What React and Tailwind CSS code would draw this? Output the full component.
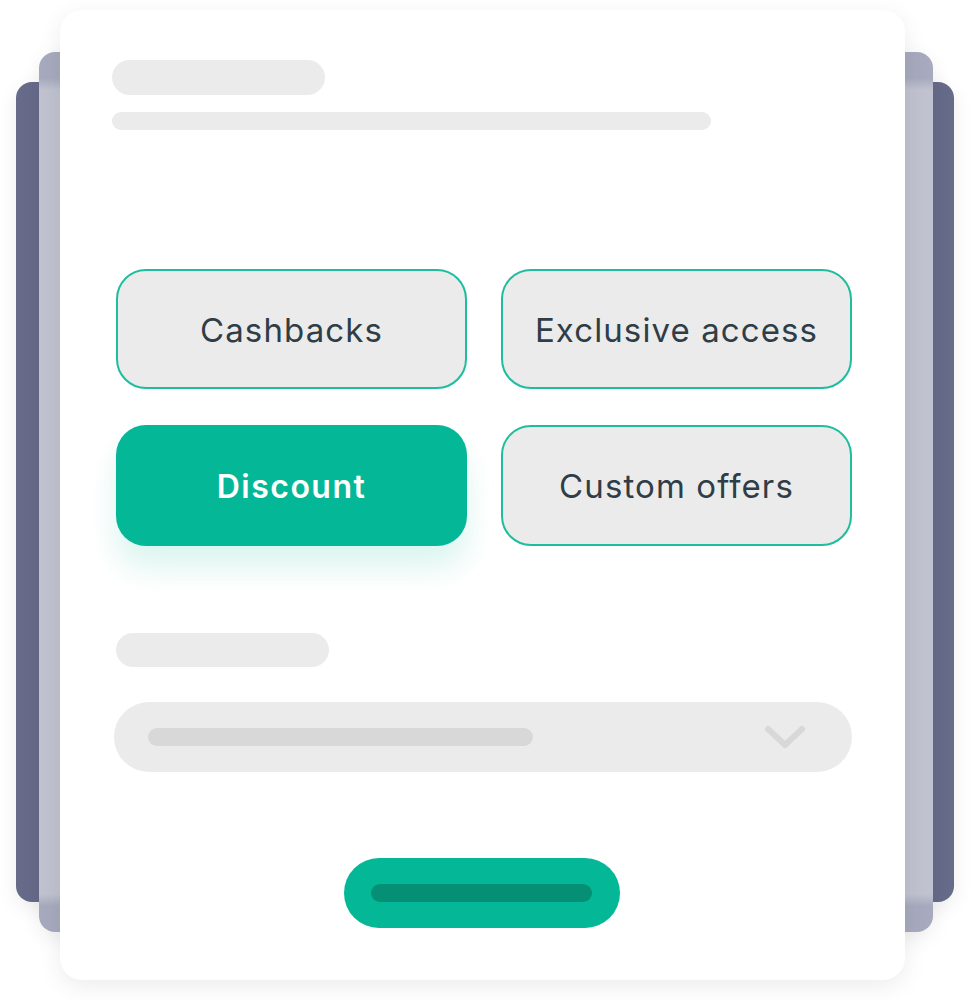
export default function App() {
  const font = { fontFamily: "Inter, 'Noto Sans', sans-serif" };
  return (
    <div className="relative w-[970px] h-[1000px] bg-white overflow-hidden" style={font}>
      {/* back dark card */}
      <div className="absolute left-[16px] top-[82px] w-[938px] h-[820px] rounded-[16px] bg-[#676b8a] shadow-[0_6px_20px_rgba(0,0,0,0.08)]" />
      {/* middle card */}
      <div className="absolute left-[39px] top-[52px] w-[894px] h-[880px] rounded-[16px] bg-[linear-gradient(180deg,#a7aabe_0px,#a7aabe_26px,#c0c2cf_38px,#c0c2cf_842px,#a7aabe_854px,#a7aabe_880px)] shadow-[0_6px_20px_rgba(0,0,0,0.08)]" />
      {/* front card */}
      <div className="absolute left-[60px] top-[10px] w-[845px] h-[970px] rounded-[22px] bg-white shadow-[0_6px_24px_rgba(0,0,0,0.08)] flex flex-col pl-[52px] pr-[53px] pt-[50px]">
        <div className="w-[213px] h-[35px] rounded-full bg-[#ebebeb]" />
        <div className="mt-[17px] w-[599px] h-[18px] rounded-full bg-[#ebebeb]" />
        <div className="mt-[139px] ml-[4px] grid grid-cols-[351px_351px] gap-x-[34px] gap-y-[36px]">
          <div className="h-[120px] pt-[3px] rounded-[30px] border-2 border-[#1dbd9d] bg-[#ebebeb] flex items-center justify-center text-[33px] text-[#2f3d47] tracking-[1.1px]">Cashbacks</div>
          <div className="h-[120px] pt-[3px] rounded-[30px] border-2 border-[#1dbd9d] bg-[#ebebeb] flex items-center justify-center text-[33px] text-[#2f3d47] tracking-[1.1px]">Exclusive access</div>
          <div className="h-[121px] pt-[2px] rounded-[30px] bg-[#04b897] flex items-center justify-center text-[32px] font-semibold text-white shadow-[0_22px_30px_rgba(4,184,151,0.14)] tracking-[1.5px]">Discount</div>
          <div className="h-[121px] pt-[3px] rounded-[30px] border-2 border-[#1dbd9d] bg-[#ebebeb] flex items-center justify-center text-[33px] text-[#2f3d47] tracking-[1.1px]">Custom offers</div>
        </div>
        <div className="mt-[87px] ml-[4px] w-[213px] h-[34px] rounded-full bg-[#ebebeb]" />
        <div className="mt-[35px] ml-[2px] w-[738px] h-[70px] rounded-full bg-[#ebebeb] flex items-center pl-[34px] pr-[46px]">
          <div className="w-[385px] h-[18px] rounded-full bg-[#d8d8d8]" />
          <div className="flex-1" />
          <svg width="42" height="26" viewBox="0 0 42 26" fill="none">
            <path d="M4 5 L21 21 L38 5" stroke="#d8d8d8" strokeWidth="6" strokeLinecap="round" strokeLinejoin="round" />
          </svg>
        </div>
        <div className="mt-[86px] self-center ml-[-1px] w-[276px] h-[70px] rounded-full bg-[#04b897] flex items-center justify-center">
          <div className="w-[221px] h-[18px] rounded-full bg-[#058f74]" />
        </div>
      </div>
    </div>
  );
}
